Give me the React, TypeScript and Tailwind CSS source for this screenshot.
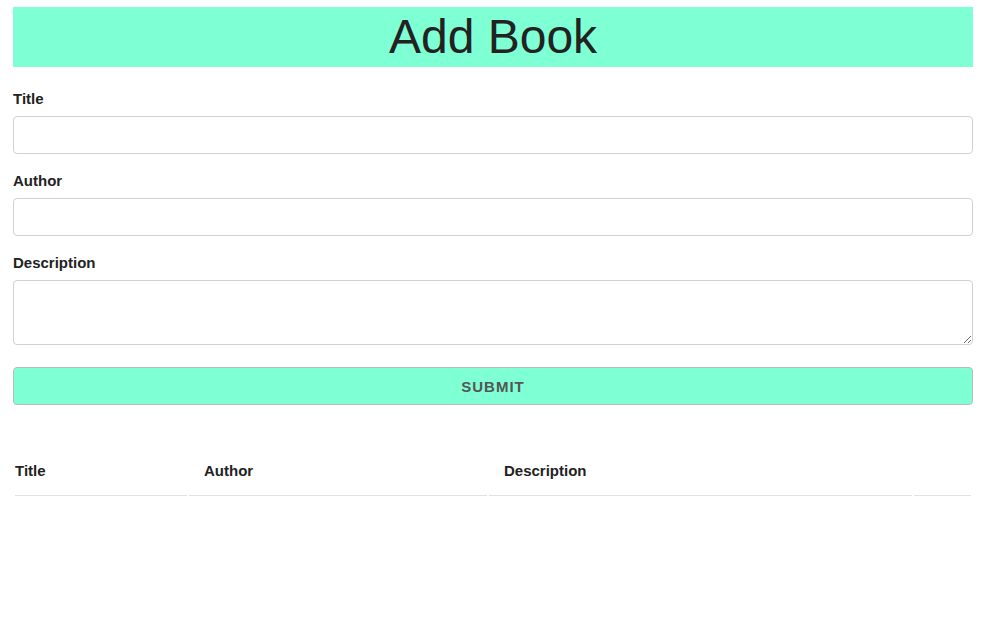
const fields = [
  { id: "title", label: "Title" },
  { id: "author", label: "Author" },
];

const columns = [
  { name: "Title", width: "w-[172px]", first: true },
  { name: "Author", width: "w-[298px]" },
  { name: "Description", width: "w-[423px]" },
  { name: "", width: "w-[57px]" },
];

export default function App() {
  return (
    <div className="min-h-screen bg-white font-['Liberation_Sans',Arial,sans-serif] text-[#222]">
      <div className="ml-[13px] w-[960px] pt-[7px]">
        {/* Header */}
        <h1 className="h-[60px] bg-[#7fffd4] text-center text-[48px] leading-[60px] font-normal">
          Add Book
        </h1>

        {/* Form */}
        <form className="mt-[20px]" onSubmit={(e) => e.preventDefault()}>
          {fields.map((f) => (
            <div key={f.id}>
              <label htmlFor={f.id} className="block text-[15px] font-bold leading-[24px] mb-[5px]">
                {f.label}
              </label>
              <input
                id={f.id}
                type="text"
                className="block w-full h-[38px] px-[10px] py-[6px] border border-[#d1d1d1] rounded-[4px] bg-white mb-[15px] outline-none"
              />
            </div>
          ))}
          <label htmlFor="description" className="block text-[15px] font-bold leading-[24px] mb-[5px]">
            Description
          </label>
          <textarea
            id="description"
            className="block w-full h-[65px] px-[10px] py-[6px] border border-[#d1d1d1] rounded-[4px] bg-white outline-none"
          />
          <button
            type="submit"
            className="mt-[22px] block w-full h-[38px] bg-[#7fffd4] border border-[#bbb] rounded-[4px] text-[15px] font-bold uppercase tracking-[1px] text-[#555] leading-[38px]"
          >
            Submit
          </button>
        </form>

        {/* Book list */}
        <table className="mt-[40px] w-[960px] table-fixed border-separate border-spacing-[2px]">
          <thead>
            <tr>
              {columns.map((c, i) => (
                <th
                  key={i}
                  className={`${c.width} ${c.first ? "pl-0" : "pl-[15px]"} pr-[15px] py-[12px] text-left text-[15px] font-bold leading-[24px] border-b border-[#e1e1e1]`}
                >
                  {c.name}
                </th>
              ))}
            </tr>
          </thead>
          <tbody />
        </table>
      </div>
    </div>
  );
}
